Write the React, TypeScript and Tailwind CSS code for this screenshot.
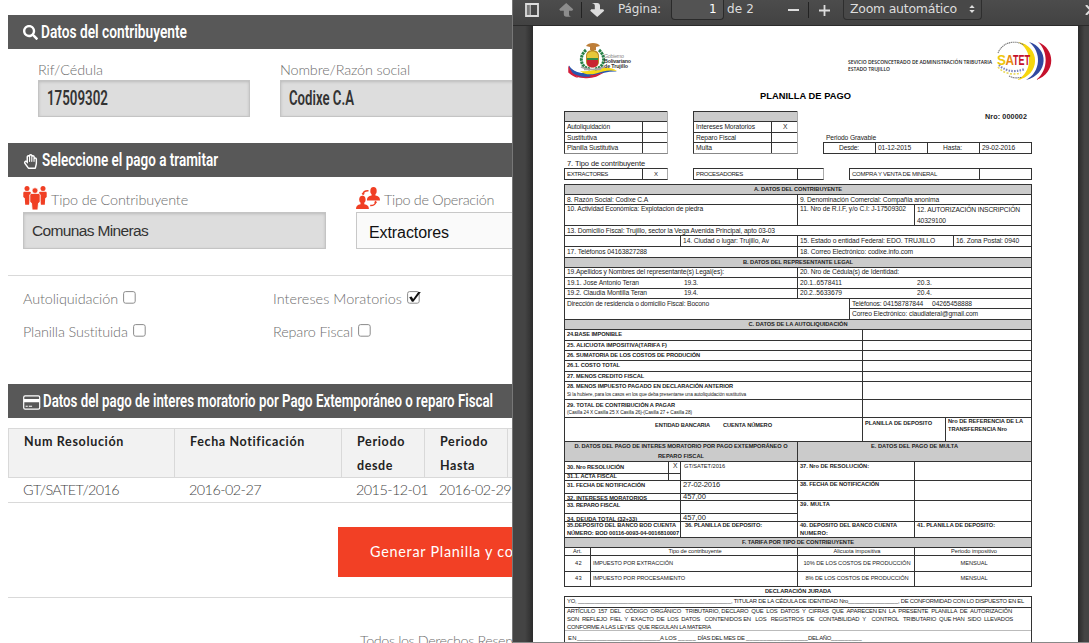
import { useLayoutEffect, useRef, type ReactNode } from "react";
import { FaSearch, FaRegHandPaper } from "react-icons/fa";

/* One line of text set to a given width, by tracking or by condensing. */
function T({ w, c = "", squeeze = false, children }: { w: number; c?: string; squeeze?: boolean; children: string }) {
  const ref = useRef<HTMLSpanElement>(null);
  useLayoutEffect(() => {
    const el = ref.current;
    if (!el) return;
    el.style.letterSpacing = "0px";
    el.style.transform = "none";
    const natural = el.getBoundingClientRect().width;
    if (squeeze) el.style.transform = `scaleX(${w / natural})`;
    else el.style.letterSpacing = `${(w - natural) / children.length}px`;
  }, [w, squeeze, children]);
  return (
    <span className={`block shrink-0 whitespace-pre leading-none ${c}`} style={{ width: w }}>
      <span ref={ref} className="inline-block origin-left">{children}</span>
    </span>
  );
}

const Row = ({ c, children }: { c: string; children?: ReactNode }) => (
  <div className={`flex shrink-0 border-t border-[#333] ${c}`}>{children}</div>
);
const Cell = ({ c = "", children }: { c?: string; children?: ReactNode }) => (
  <div className={`flex shrink-0 items-center overflow-visible ${c}`}>{children}</div>
);

const B = "font-bold text-[5.7px]";
const BAR = "flex h-[34px] shrink-0 items-center bg-[#585858] pl-[15px] text-white";
const LABEL = "font-[Lato] font-light text-[14.4px] text-[#6e6e6e]";
const OSW = "font-[Roboto] font-semibold text-[18.5px]";

function Heading({ w, icon, children }: { w: number; icon: ReactNode; children: string }) {
  return (
    <div className={BAR}>
      {icon}
      <T w={w} squeeze c={OSW}>{children}</T>
    </div>
  );
}

function Check({ on = false }: { on?: boolean }) {
  return (
    <svg className="-mt-1 ml-[5px] overflow-visible" width="13" height="13" viewBox="0 0 13 13">
      <rect x=".6" y=".6" width="11.6" height="11.6" rx="2" fill="#fff" stroke="#8b8b8b" />
      {on && <path d="M2.2 6.2 L4.6 5.4 L6.2 8 L11.2 1 L13.8 1 L6.4 10.8 L4.9 10.8 Z" fill="#111" />}
    </svg>
  );
}

function PeopleIcon() {
  return (
    <svg width="24" height="24" viewBox="0 0 24 24" fill="#f03f24">
      <circle cx="4" cy="2.6" r="2.5" /><circle cx="20" cy="2.6" r="2.5" />
      <path d="M.8 5.7h6.4l1 1.2-.8 8.3-1 .1-.3 3.4H2.2l-.4-6.4L.3 11V6.8zM23.2 5.7h-6.4l-1 1.2.8 8.3 1 .1.3 3.4h3.9l.4-6.4 1.5-1.3V6.8z" />
      <path d="M8.2 7.4h7.6l1.4 1.3v7l-1.7 1.5-.6 6.8H9.1l-.6-6.800-1.7-1.500v-7z" stroke="#fff" strokeWidth=".9" />
      <circle cx="12" cy="4.6" r="2.8" stroke="#fff" strokeWidth=".6" />
    </svg>
  );
}

function SwapIcon() {
  return (
    <svg width="24" height="23" viewBox="0 0 24 23" fill="#f03f24">
      <ellipse cx="17.5" cy="3.9" rx="3.2" ry="3.8" />
      <path d="M15.600 7h3.800v1.500c3 .5 4.600 1.600 4.600 4.900H11c0-3.300 1.600-4.400 4.600-4.900z" />
      <ellipse cx="6.4" cy="12.6" rx="3.2" ry="3.8" />
      <path d="M4.500 15.700h3.800v1.500c3 .5 4.600 1.600 4.600 4.900H0c0-3.300 1.500-4.400 4.500-4.900z" />
      <path d="M7 7C7.400 4.300 9 3.600 12.500 3.800M19.800 15c-.4 2.800-2 3.600-5.600 3.500" fill="none" stroke="#f03f24" strokeWidth="1.5" />
      <path d="M5.600 6l1.300 2.500L9 6.600zM21 15.800l-1.200-2.200-2 1.800z" />
    </svg>
  );
}

const CardIcon = () => (
  <svg className="mr-[2px] mt-0.5 shrink-0" width="18" height="15" viewBox="0 0 18 15">
    <rect x=".7" y=".9" width="16" height="13.2" rx="1.4" fill="none" stroke="#fff" strokeWidth="1.2" />
    <path d="M1 4h15.500v3.300H1zM2.600 10.800h2.200v1H2.600zM5.800 10.800h3.300v1H5.800z" fill="#fff" />
  </svg>
);

function FormPage() {
  return (
    <div className="flex h-[643px] w-[512px] shrink-0 flex-col overflow-hidden bg-white pl-2 pt-[15px]">
      <Heading w={146} icon={<FaSearch className="mr-[3px] mt-px size-[15px]" />}>Datos del contribuyente</Heading>
      <div className="flex shrink-0 gap-[30px] pl-[30px] pt-[14px]">
        <div className="w-[212px] shrink-0">
          <div className="h-[17px]"><T w={65} c={LABEL}>Rif/Cédula</T></div>
          <div className="flex h-[37px] items-center border border-[#c4c4c4] bg-[#ddd] pl-2 text-[#333] shadow-[inset_0_1px_3px_#bbb]">
            <T w={61} squeeze c="mt-px font-[Roboto] font-semibold text-[19.5px]">17509302</T>
          </div>
        </div>
        <div className="w-[400px] shrink-0">
          <div className="h-[17px]"><T w={130} c={LABEL}>Nombre/Razón social</T></div>
          <div className="flex h-[37px] items-center border border-[#c4c4c4] bg-[#ddd] pl-2 text-[#333] shadow-[inset_0_1px_3px_#bbb]">
            <T w={65} squeeze c="mt-px font-[Roboto] font-semibold text-[19.5px]">Codixe C.A</T>
          </div>
        </div>
      </div>
      <div className="h-[26px] shrink-0" />
      <Heading w={176} icon={<FaRegHandPaper className="mr-1 mt-0.5 size-[15px]" />}>Seleccione el pago a tramitar</Heading>
      <div className="flex shrink-0 gap-[30px] pl-[15px] pt-[9px]">
        <div className="w-[303px] shrink-0">
          <div className="flex h-[26px] items-start gap-1"><PeopleIcon /><T w={137} c={`mt-[7px] ${LABEL}`}>Tipo de Contribuyente</T></div>
          <div className="flex h-[37px] items-center border border-[#c4c4c4] bg-[#ddd] pl-2 text-[#333] shadow-[inset_0_1px_3px_#bbb]">
            <T w={116} c="font-['Liberation_Sans'] text-[15.5px]">Comunas Mineras</T>
          </div>
        </div>
        <div className="w-[303px] shrink-0">
          <div className="flex h-[26px] items-start gap-1"><div className="pt-px"><SwapIcon /></div><T w={110} c={`mt-[7px] ${LABEL}`}>Tipo de Operación</T></div>
          <div className="flex h-[37px] items-center border border-[#c8c8c8] bg-[#fafafa] pl-3 pt-1 text-[#111]">
            <T w={80} c="font-['Liberation_Sans'] text-[16px]">Extractores</T>
          </div>
        </div>
      </div>
      <div className="mt-[26px] h-px shrink-0 bg-[#d9d9d9]" />
      <div className="grid shrink-0 grid-cols-[250px_1fr] grid-rows-[33px_33px] pl-[15px] pt-[7px]">
        <div className="flex items-center"><T w={95} c={LABEL}>Autoliquidación</T><Check /></div>
        <div className="flex items-center"><T w={129} c={LABEL}>Intereses Moratorios</T><Check on /></div>
        <div className="flex items-center"><T w={105} c={LABEL}>Planilla Sustituida</T><Check /></div>
        <div className="flex items-center"><T w={80} c={LABEL}>Reparo Fiscal</T><Check /></div>
      </div>
      <div className="h-[35px] shrink-0" />
      <Heading w={450} icon={<CardIcon />}>Datos del pago de interes moratorio por Pago Extemporáneo o reparo Fiscal</Heading>
      <div className="mt-[10px] grid h-[50px] w-[600px] shrink-0 grid-cols-[166px_167px_83px_83px_83px] border border-[#d9d9d9] bg-[#f2f2f2] font-[Lato] text-[12.5px] font-bold text-[#222]">
        <div className="border-r border-[#d9d9d9] pl-[15px] pt-[7px]"><T w={100}>Num Resolución</T></div>
        <div className="border-r border-[#d9d9d9] pl-[15px] pt-[7px]"><T w={115}>Fecha Notificación</T></div>
        <div className="flex flex-col gap-[11.5px] border-r border-[#d9d9d9] pl-[15px] pt-[7px]"><T w={48}>Periodo</T><T w={36}>desde</T></div>
        <div className="flex flex-col gap-[11.5px] border-r border-[#d9d9d9] pl-[15px] pt-[7px]"><T w={48}>Periodo</T><T w={35}>Hasta</T></div>
      </div>
      <div className="grid h-[25px] w-[600px] shrink-0 grid-cols-[166px_167px_83px_83px] items-center border-b border-[#d9d9d9] pl-[15px] pt-px font-[Lato] text-[14.4px] font-light text-[#444]">
        <T w={96}>GT/SATET/2016</T><T w={72}>2016-02-27</T><T w={72}>2015-12-01</T><T w={72}>2016-02-29</T>
      </div>
      <div className="ml-[330px] mt-6 flex h-[50px] w-[300px] shrink-0 items-center bg-[#f24025] pl-8 text-white">
        <T w={194} c="font-[Lato] text-[14.4px]">Generar Planilla y continuar</T>
      </div>
      <div className="mt-5 h-px shrink-0 bg-[#d9d9d9]" />
      <div className="shrink-0 pl-[352px] pt-[36px]"><T w={184} c={LABEL}>Todos los Derechos Reservados</T></div>
    </div>
  );
}

function Toolbar() {
  return (
    <div className="flex h-[26px] shrink-0 items-start overflow-hidden border-b border-[#2b2b2b] bg-linear-to-b from-[#4c4c4c] to-[#424242] font-['DejaVu_Sans'] text-[12px] text-[#ddd]">
      <svg className="ml-3 mt-[3px] shrink-0" width="14" height="14" viewBox="0 0 14 14">
        <path d="M1 1h12v12H1z" fill="none" stroke="#ddd" strokeWidth="1.8" />
        <path d="M2 2h2.600v10H2z" fill="#777" /><path d="M5.200 1v12" stroke="#ddd" />
      </svg>
      <svg className="ml-5 mt-[3px] shrink-0" width="15" height="14" viewBox="0 0 15 14" fill="#8d8d8d">
        <path d="M7.200 0l7 6.200-1 1.500H10v3.700c0 1.200 1 2.200 2.600 2.400H7.400c-1.800 0-2.600-1-2.600-2.800V7.700H1.200L.2 6.200z" />
      </svg>
      <div className="ml-[7px] mt-0.5 h-4 w-px shrink-0 bg-[#222]" />
      <svg className="ml-2 mt-[3px] shrink-0" width="15" height="14" viewBox="0 0 15 14" fill="#ddd">
        <path d="M7.200 14l7-6.200-1-1.500H10V2.700C10 1.200 9 .1 7.200 0H1.800c2 .4 3 1.300 3 2.600v3.700H1.200l-1 1.500z" />
      </svg>
      <div className="ml-[13px] w-[53px] shrink-0 pt-[3px]"><T w={43}>Página:</T></div>
      <div className="flex h-5 w-[53px] shrink-0 justify-end rounded-b-sm border border-t-0 border-[#2a2a2a] bg-[#535353] pr-[6px] pt-[3px] text-white"><T w={8}>1</T></div>
      <div className="ml-[3px] w-[61px] shrink-0 pt-[3px]"><T w={27}>de 2</T></div>
      <div className="mt-[9px] h-0.5 w-[11px] shrink-0 bg-[#ddd]" />
      <div className="ml-[9px] mt-0.5 h-4 w-px shrink-0 bg-[#222]" />
      <svg className="ml-[10px] mt-[5px] shrink-0" width="11" height="11" viewBox="0 0 11 11"><path d="M5.500 0v11M0 5.500h11" stroke="#ddd" strokeWidth="1.8" /></svg>
      <div className="ml-[13px] flex h-5 w-[139px] shrink-0 rounded-b-sm border border-t-0 border-[#2e2e2e] bg-[#484848] pl-1.5 pt-[3px]">
        <T w={107} c="text-[12.5px]">Zoom automático</T>
        <svg className="ml-[12px] mt-0.5" width="6" height="8" viewBox="0 0 6 8" fill="#ddd"><path d="M.3 3L3 0l2.700 3zM.3 5L3 8l2.700-3z" /></svg>
      </div>
      <svg className="ml-[103px] mt-[5px] shrink-0" width="6" height="10" viewBox="0 0 6 10"><path d="M1 0l4.500 5L1 10" fill="none" stroke="#ddd" strokeWidth="2" /></svg>
    </div>
  );
}

function StateLogo() {
  return (
    <svg width="68" height="40" viewBox="0 0 68 40">
      <path d="M2 23.500c5 8 14 8.500 22 6.500 8-2.200 16-4 26-.5-9-.3-15 1.500-22 4-10 3.500-20 3-26-5z" fill="#2857b0" />
      <path d="M1.500 24.500c4 8 13 10 24 8.500 4-.5 8-1.500 11-2.500-5 4-12 6.500-20 5.500-7-.7-12-3-15-5.500z" fill="#d31f3c" />
      <path d="M2 24c4 6 11 8.500 19 8l3 2.500C14 36 5 32 2 28z" fill="#2857b0" />
      <path d="M13 29c8 1 14-1 20-2.500 7-1.500 12-1 17 2.500-9-1.500-15 .5-21 2.500-6 1.600-12 1-16-2.500z" fill="#f8d814" />
      <path d="M1.500 23.500v7c3 3 6 4.500 10 5.500-5-3-8-7-10-12.500z" fill="#d31f3c" />
      <path d="M19 8c-8 7-5 18 4 19M32 8c8 7 5 18-4 19" fill="none" stroke="#278047" strokeWidth="3" strokeDasharray="2.500 .7" />
      <path d="M19 14c0-8 13-8 13 0v6c0 7-13 7-13 0z" fill="#b78a24" />
      <path d="M20 14c0-6 11-6 11 0v2H20z" fill="#e5c83a" /><path d="M20 16h11v3.500H20z" fill="#2e8b4a" /><path d="M20 18h11v3c0 6-11 6-11 0z" fill="#c92432" />
      <path d="M19 4c2-4 12-4 14 0l-4 1v3h-6V5z" fill="#bd7e38" />
      <path d="M14 25c7 3 16 3 23 0M17 27.500h17" fill="none" stroke="#a6a6a6" strokeWidth="1.6" />
      <g fontFamily="Liberation Sans" fontSize="5.3">
        <text x="37" y="16" fill="#888" textLength="20">Gobierno</text>
        <text x="37" y="21" fill="#333" fontWeight="bold" textLength="27">Bolivariano</text>
        <text x="37" y="26" fill="#333" fontWeight="bold" textLength="24">de Trujillo</text>
      </g>
    </svg>
  );
}

function SatetLogo() {
  return (
    <svg width="60" height="42" viewBox="0 0 60 42">
      <path d="M43 2C61 9 61 33 41 40 53 31 54 12 43 2z" fill="#c5112c" />
      <path d="M34 2C54 8 54 34 31 40 46 32 47 12 34 2z" fill="#3148a0" />
      <path d="M23 2C46 6 46 36 22 40 38 32 38 10 23 2z" fill="#f6d60d" />
      <path d="M3 13C7 3 19-1 29 5M14 36c4 2 8 2.500 13 1" fill="none" stroke="#777" strokeWidth="1.1" strokeDasharray="1.300 .6" />
      <path d="M4 25c5 5 13 8.500 26 4" fill="none" stroke="#7b84bb" strokeWidth="2.2" strokeDasharray="1.500 1.300" />
      <path d="M3 27c5 6 13 8.500 23 6" fill="none" stroke="#ead95b" strokeWidth="1.6" strokeDasharray="2 1.500" />
      <g fontFamily="Liberation Sans" fontWeight="bold" fontSize="15">
        <text x="2" y="25" fill="#eec80c" textLength="9" lengthAdjust="spacingAndGlyphs">S</text>
        <text x="10.500" y="25" fill="#e98a10" textLength="8.500" lengthAdjust="spacingAndGlyphs">A</text>
        <text x="18" y="25" fill="#c5112c" textLength="17" lengthAdjust="spacingAndGlyphs">TET</text>
      </g>
    </svg>
  );
}

const L = "border-l border-[#333] pl-[2px]";

function TopBoxes() {
  return (
    <div className="flex h-[43px] shrink-0">
      <div className="h-[43px] w-[104px] shrink-0 border-x border-b border-[#333] border-b-[#888] border-r-[#aaa]">
        <Row c="h-[10px] bg-[#cbcbcb]" />
        <Row c="h-[11px]"><Cell c="w-[77px] pl-[2px]"><T w={43}>Autoliquidación</T></Cell><Cell c={L} /></Row>
        <Row c="h-[10px]"><Cell c="w-[77px] pl-[2px] pt-px"><T w={30}>Sustitutiva</T></Cell><Cell c={L} /></Row>
        <Row c="h-[11px]"><Cell c="w-[77px] pl-[2px]"><T w={51}>Planilla Sustitutiva</T></Cell><Cell c={L} /></Row>
      </div>
      <div className="ml-[25px] h-[43px] w-[105px] shrink-0 border-x border-b border-[#333] border-b-[#888] border-r-[#aaa]">
        <Row c="h-[10px] bg-[#cbcbcb]" />
        <Row c="h-[11px]"><Cell c="w-[77px] pl-[2px]"><T w={59}>Intereses Moratorios</T></Cell><Cell c={`${L} pl-[11px]`}><T w={5}>X</T></Cell></Row>
        <Row c="h-[10px]"><Cell c="w-[77px] pl-[2px] pt-px"><T w={40}>Reparo Fiscal</T></Cell><Cell c={L} /></Row>
        <Row c="h-[11px]"><Cell c="w-[77px] pl-[2px]"><T w={16}>Multa</T></Cell><Cell c={L} /></Row>
      </div>
      <div className="ml-[25px] flex w-[209px] shrink-0 flex-col">
        <div className="flex justify-end pr-[5px] pt-[2px]"><T w={42} c="font-bold text-[7.2px]">Nro: 000002</T></div>
        <div className="flex h-[22px] items-end pl-[3px]"><T w={50}>Periodo Gravable</T></div>
        <div className="flex h-[12px] shrink-0 border-y border-r border-[#333]">
          <Cell c={`w-[52px] ${L} pl-[15px]`}><T w={20}>Desde:</T></Cell>
          <Cell c={`w-[52px] ${L}`}><T w={33}>01-12-2015</T></Cell>
          <Cell c={`w-[52px] ${L} pl-[15px]`}><T w={19}>Hasta:</T></Cell>
          <Cell c={`w-[52px] ${L}`}><T w={33}>29-02-2016</T></Cell>
        </div>
      </div>
    </div>
  );
}

function MainTable() {
  return (
    <div className="w-[468px] shrink-0 border-r border-b border-[#333]">
      <Row c="h-[10px] justify-center border-l bg-[#cbcbcb]"><Cell><T w={88} c={B}>A. DATOS DEL CONTRIBUYENTE</T></Cell></Row>
      <Row c="h-[10px]"><Cell c={`w-[233px] pt-px ${L}`}><T w={81}>8. Razón Social: Codixe C.A</T></Cell><Cell c={`pt-px ${L}`}><T w={139}>9. Denominación Comercial: Compañia anonima</T></Cell></Row>
      <Row c="h-[21px]">
        <Cell c={`w-[233px] items-start pt-[1px] ${L}`}><T w={136}>10. Actividad Económica: Explotacion de piedra</T></Cell>
        <Cell c={`w-[117px] items-start pt-[1px] ${L}`}><T w={106}>11. Nro de R.I.F, y/o C.I: J-17509302</T></Cell>
        <Cell c={`flex-col !items-start gap-[4px] pt-[2px] ${L}`}><T w={103}>12. AUTORIZACIÓN INSCRIPCIÓN</T><T w={29}>40329100</T></Cell>
      </Row>
      <Row c="h-[10px]"><Cell c={`pt-px ${L}`}><T w={208}>13. Domicilio Fiscal: Trujillo, sector la Vega Avenida Principal, apto 03-03</T></Cell></Row>
      <Row c="h-[11px]"><Cell c={`w-[116px] ${L}`} /><Cell c={`w-[117px] ${L}`}><T w={86}>14. Ciudad o lugar: Trujillo, Av</T></Cell><Cell c={`w-[156px] ${L}`}><T w={135}>15. Estado o entidad Federal: EDO. TRUJILLO</T></Cell><Cell c={L}><T w={63}>16. Zona Postal: 0940</T></Cell></Row>
      <Row c="h-[11px]"><Cell c={`w-[233px] ${L}`}><T w={80}>17. Teléfonos 04163827288</T></Cell><Cell c={L}><T w={113}>18. Correo Electrónico: codixe.info.com</T></Cell></Row>
      <Row c="h-[10px] justify-center border-l bg-[#cbcbcb]"><Cell><T w={110} c={B}>B. DATOS DEL REPRESENTANTE LEGAL</T></Cell></Row>
      <Row c="h-[10px]"><Cell c={`w-[233px] ${L}`}><T w={157}>19.Apellidos y Nombres del representante(s) Legal(es):</T></Cell><Cell c={L}><T w={99}>20. Nro de Cédula(s) de Identidad:</T></Cell></Row>
      <Row c="h-[11px]"><Cell c={`w-[120px] ${L}`}><T w={72}>19.1. Jose Antonio Teran</T></Cell><Cell c="w-[113px]"><T w={14}>19.3.</T></Cell><Cell c={`w-[120px] ${L}`}><T w={42}>20.1..6578411</T></Cell><Cell><T w={15}>20.3.</T></Cell></Row>
      <Row c="h-[10px]"><Cell c={`w-[120px] ${L}`}><T w={80}>19.2. Claudia Montilla Teran</T></Cell><Cell c="w-[113px]"><T w={14}>19.4.</T></Cell><Cell c={`w-[120px] ${L}`}><T w={42}>20.2..5633679</T></Cell><Cell><T w={15}>20.4.</T></Cell></Row>
      <Row c="h-[21px]">
        <Cell c={`w-[285px] items-start pt-[2px] ${L}`}><T w={142}>Dirección de residencia o domicilio Fiscal: Bocono</T></Cell>
        <div className="flex w-[182px] flex-col border-l border-[#333]">
          <Cell c="h-[9px] pl-[2px] pt-px"><T w={120}>Teléfonos: 04158787844     04265458888</T></Cell>
          <Row c="h-[11px]"><Cell c="pl-[2px]"><T w={126}>Correo Electrónico: claudiateral@gmail.com</T></Cell></Row>
        </div>
      </Row>
      <Row c="h-[10px] justify-center border-l bg-[#cbcbcb]"><Cell><T w={99} c={B}>C. DATOS DE LA AUTOLIQUIDACIÓN</T></Cell></Row>
      <Row c="h-[11px]"><Cell c={`w-[298px] ${L}`}><T w={55} c={B}>24.BASE IMPONIBLE</T></Cell><Cell c={L} /></Row>
      <Row c="h-[10px]"><Cell c={`w-[298px] ${L}`}><T w={100} c={B}>25. ALICUOTA IMPOSITIVA(TARIFA F)</T></Cell><Cell c={L} /></Row>
      <Row c="h-[10px]"><Cell c={`w-[298px] ${L}`}><T w={133} c={B}>26. SUMATORIA DE LOS COSTOS DE PRODUCIÓN</T></Cell><Cell c={L} /></Row>
      <Row c="h-[11px]"><Cell c={`w-[298px] ${L}`}><T w={53} c={B}>26.1. COSTO TOTAL</T></Cell><Cell c={L} /></Row>
      <Row c="h-[10px]"><Cell c={`w-[298px] ${L}`}><T w={77} c={B}>27. MENOS CREDITO FISCAL</T></Cell><Cell c={L} /></Row>
      <Row c="h-[18px]"><Cell c={`w-[298px] flex-col !items-start gap-[3px] pt-[2px] ${L}`}><T w={166} c={B}>28. MENOS IMPUESTO PAGADO EN DECLARACIÓN ANTERIOR</T><T w={179} c="text-[4.8px]">Si la hubiere, para los casos en los que deba presentarse una autoliquidación sustitutiva</T></Cell><Cell c={L} /></Row>
      <Row c="h-[18px]"><Cell c={`w-[298px] flex-col !items-start gap-[2px] pt-[3px] ${L}`}><T w={108} c={B}>29. TOTAL DE CONTRIBUCIÓN A PAGAR</T><T w={125} c="text-[4.8px]">(Casilla 24 X Casilla 25 X Casilla 26)-(Casilla 27 + Casilla 28)</T></Cell><Cell c={L} /></Row>
      <Row c="h-[24px]">
        <Cell c={`w-[298px] !items-start pt-[5px] ${L}`}><T w={55} c={`ml-[88px] ${B}`}>ENTIDAD BANCARIA</T><T w={49} c={`ml-[13px] ${B}`}>CUENTA NÚMERO</T></Cell>
        <Cell c={`w-[83px] !items-start pt-[3px] ${L}`}><T w={67} c={B}>PLANILLA DE DEPOSITO</T></Cell>
        <Cell c={`flex-col !items-start gap-[2px] pt-px ${L}`}><T w={75} c={B}>Nro DE REFERENCIA DE LA</T><T w={59} c={B}>TRANSFERENCIA Nro</T></Cell>
      </Row>
      <div className="flex h-[96px] shrink-0 text-[5.7px] font-bold">
        <div className="w-[233px] shrink-0">
          <Row c="h-[20px] flex-col items-center gap-[4px] border-l bg-[#cbcbcb] pt-[2px]"><T w={213}>D. DATOS DEL PAGO DE INTERES MORATORIO POR PAGO EXTEMPORÁNEO O</T><T w={46}>REPARO FISCAL</T></Row>
          <div className="flex h-[19px]">
            <div className="w-[116px]">
              <Row c="h-[12px]"><Cell c={`w-[104px] ${L}`}><T w={57}>30. Nro RESOLUCIÓN</T></Cell><Cell c={`${L} pl-[4px]`}><T w={5} c="pb-0.5 text-[6.7px] font-normal">X</T></Cell></Row>
              <Row c="h-[7px]"><Cell c={`w-[104px] ${L}`}><T w={50}>31.1. ACTA FISCAL</T></Cell><Cell c={L} /></Row>
            </div>
            <Row c="h-[19px] w-[117px] border-l pl-[3px] pt-[2px]"><T w={41} c="font-normal">GT/SATET/2016</T></Row>
          </div>
          <Row c="h-[13px]"><Cell c={`w-[116px] !items-start pt-[2px] ${L}`}><T w={78}>31. FECHA DE NOTIFICACIÓN</T></Cell><Cell c={`!items-start ${L}`}><T w={37} c="text-[7.6px] font-normal">27-02-2016</T></Cell></Row>
          <Row c="h-[7px]"><Cell c={`w-[116px] pt-[3px] ${L}`}><T w={80}>32. INTERESES MORATORIOS</T></Cell><Cell c={L}><T w={23} c="text-[7.6px] font-normal">457,00</T></Cell></Row>
          <Row c="h-[13px]"><Cell c={`w-[116px] !items-start pt-[2px] ${L}`}><T w={53}>33. REPARO FISCAL</T></Cell><Cell c={L} /></Row>
          <Row c="h-[8px]"><Cell c={`w-[116px] pt-[4px] ${L}`}><T w={70}>34. DEUDA TOTAL (32+33)</T></Cell><Cell c={L}><T w={23} c="text-[7.6px] font-normal">457,00</T></Cell></Row>
          <Row c="h-[16px]"><Cell c={`w-[116px] flex-col !items-start gap-[2px] pt-px ${L}`}><T w={109}>35.DEPOSITO DEL BANCO BOD CUENTA</T><T w={112}>NÚMERO: BOD 00116-0093-04-0016810007</T></Cell><Cell c={`!items-start pt-px pl-[4px] ${L}`}><T w={77}>36. PLANILLA DE DEPOSITO:</T></Cell></Row>
        </div>
        <div className="w-[234px] shrink-0">
          <Row c="h-[20px] justify-center border-l bg-[#cbcbcb] pt-[2px]"><T w={87}>E. DATOS DEL PAGO DE MULTA</T></Row>
          <Row c="h-[19px]"><Cell c={`w-[117px] !items-start pt-[2px] ${L}`}><T w={69}>37. Nro DE RESOLUCIÓN:</T></Cell><Cell c={L} /></Row>
          <Row c="h-[20px]"><Cell c={`w-[117px] !items-start pt-px ${L}`}><T w={79}>38. FECHA DE NOTIFICACIÓN</T></Cell><Cell c={L} /></Row>
          <Row c="h-[21px]"><Cell c={`w-[117px] !items-start pt-px ${L}`}><T w={30}>39. MULTA</T></Cell><Cell c={L} /></Row>
          <Row c="h-[16px]"><Cell c={`w-[117px] flex-col !items-start gap-[2px] pt-px ${L}`}><T w={97}>40. DEPOSITO DEL BANCO CUENTA</T><T w={28}>NUMERO:</T></Cell><Cell c={`!items-start pt-px ${L}`}><T w={78}>41. PLANILLA DE DEPOSITO:</T></Cell></Row>
        </div>
      </div>
      <Row c="h-[10px] justify-center border-l bg-[#cbcbcb]"><Cell><T w={112} c={B}>F. TARIFA POR TIPO DE CONTRIBUYENTE</T></Cell></Row>
      <div className="text-[5.7px]">
        <Row c="h-[8px]"><Cell c={`w-[26px] pl-[8px] ${L}`}><T w={9}>Art.</T></Cell><Cell c={`w-[207px] justify-center ${L}`}><T w={53}>Tipo de contribuyente</T></Cell><Cell c={`w-[117px] justify-center ${L}`}><T w={47}>Alicuota impositiva</T></Cell><Cell c={`w-[117px] justify-center ${L}`}><T w={46}>Periodo impositivo</T></Cell></Row>
        <Row c="h-[16px]"><Cell c={`w-[26px] justify-center ${L}`}><T w={7}>42</T></Cell><Cell c={`w-[207px] ${L}`}><T w={80}>IMPUESTO POR EXTRACCIÓN</T></Cell><Cell c={`w-[117px] justify-center ${L}`}><T w={107}>10% DE LOS COSTOS DE PRODUCCIÓN</T></Cell><Cell c={`w-[117px] justify-center ${L}`}><T w={27}>MENSUAL</T></Cell></Row>
        <Row c="h-[15px]"><Cell c={`w-[26px] justify-center ${L}`}><T w={7}>43</T></Cell><Cell c={`w-[207px] ${L}`}><T w={92}>IMPUESTO POR PROCESAMIENTO</T></Cell><Cell c={`w-[117px] justify-center ${L}`}><T w={103}>8% DE LOS COSTOS DE PRODUCCIÓN</T></Cell><Cell c={`w-[117px] justify-center ${L}`}><T w={27}>MENSUAL</T></Cell></Row>
      </div>
    </div>
  );
}

function Sheet() {
  return (
    <div className="flex h-[616px] w-[545px] shrink-0 flex-col overflow-hidden bg-white pl-[31px] font-['Liberation_Sans'] text-[6.7px] text-[#222]">
      <div className="flex h-[66px] shrink-0">
        <div className="ml-[3px] mt-4"><StateLogo /></div>
        <div className="ml-[213px] mt-[34px] flex w-[145px] shrink-0 flex-col gap-[2px] font-['Open_Sans'] text-[5px] font-semibold"><T w={144}>SEVICIO DESCONCETRADO DE ADMINISTRACIÓN TRIBUTARIA</T><T w={42}>ESTADO TRUJILLO</T></div>
        <div className="ml-[2px] mt-[14px]"><SatetLogo /></div>
      </div>
      <div className="h-[19px] shrink-0 pl-[196px]"><T w={91} c="font-bold text-[9.3px] text-black">PLANILLA DE PAGO</T></div>
      <TopBoxes />
      <div className="flex h-[14px] shrink-0 items-center pl-[3px] pt-[5px]"><T w={78} c="text-[7.5px]">7. Tipo de contribuyente</T></div>
      <div className="flex h-[12px] shrink-0 text-[6px]">
        <div className="flex w-[104px] shrink-0 border-y border-r border-[#333] border-r-[#aaa]"><Cell c={`w-[78px] ${L}`}><T w={41}>EXTRACTORES</T></Cell><Cell c={`${L} pl-[11px]`}><T w={4}>X</T></Cell></div>
        <div className="ml-[25px] flex w-[131px] shrink-0 border-y border-r border-[#333] border-r-[#aaa]"><Cell c={`w-[104px] ${L}`}><T w={47}>PROCESADORES</T></Cell><Cell c={L} /></div>
        <div className="ml-[25px] flex w-[183px] shrink-0 border-y border-r border-[#333]"><Cell c={`w-[130px] ${L}`}><T w={85}>COMPRA Y VENTA DE MINERAL</T></Cell><Cell c={L} /></div>
      </div>
      <div className="h-[4px] shrink-0" />
      <MainTable />
      <div className="flex h-[9px] w-[468px] shrink-0 items-center justify-center"><T w={66} c={B}>DECLARACIÓN JURADA</T></div>
      <div className="h-[60px] w-[468px] shrink-0 border-x border-[#333] text-[5.9px]">
        <Row c="h-[11px] items-center pl-[2px]">
          <T w={11}>YO, </T><T w={153}>______________________________________________</T><T w={117}>, TITULAR DE LA CÉDULA DE IDENTIDAD Nro</T><T w={50}>_______________</T><T w={126}>, DE CONFORMIDAD CON LO DISPUESTO EN EL</T>
        </Row>
        <Row c="h-[23px] flex-col gap-[2px] pl-[2px] pt-px">
          <T w={445}>ARTÍCULO  157  DEL   CÓDIGO  ORGÁNICO   TRIBUTARIO, DECLARO  QUE  LOS  DATOS  Y  CIFRAS  QUE  APARECEN EN  LA  PRESENTE  PLANILLA  DE  AUTORIZACIÓN</T>
          <T w={446}>SON  REFLEJO  FIEL  Y  EXACTO  DE  LOS  DATOS   CONTENIDOS EN   LOS   REGISTROS  DE   CONTABILIDAD  Y    CONTROL   TRIBUTARIO  QUE HAN  SIDO  LLEVADOS</T>
          <T w={144}>CONFORME A LAS LEYES  QUE REGULAN LA MATERIA</T>
        </Row>
        <div className="flex border-t border-[#bbb] pl-[3px] pt-[5px]">
          <T w={9}>EN</T><T w={83}>_________________________</T><T w={18}>A LOS </T><T w={18}>_____</T><T w={50}> DÍAS DEL MES DE </T><T w={62}>__________________</T><T w={23}>DEL AÑO</T><T w={31}>_________</T>
        </div>
      </div>
    </div>
  );
}

export default function App() {
  return (
    <div className="flex h-[643px] w-[1089px] overflow-hidden bg-white">
      <FormPage />
      <div className="flex h-[643px] w-[577px] shrink-0 flex-col border-l border-[#777] bg-[#404040]">
        <Toolbar />
        <div className="flex h-[616px] shrink-0">
          <div className="w-5 shrink-0 bg-linear-to-r from-[#444] from-60% to-[#2b2b2b]" />
          <Sheet />
          <div className="grow bg-linear-to-r from-[#2b2b2b] to-[#444] to-60%" />
        </div>
        <div className="h-px shrink-0 bg-[#888]" />
      </div>
    </div>
  );
}
